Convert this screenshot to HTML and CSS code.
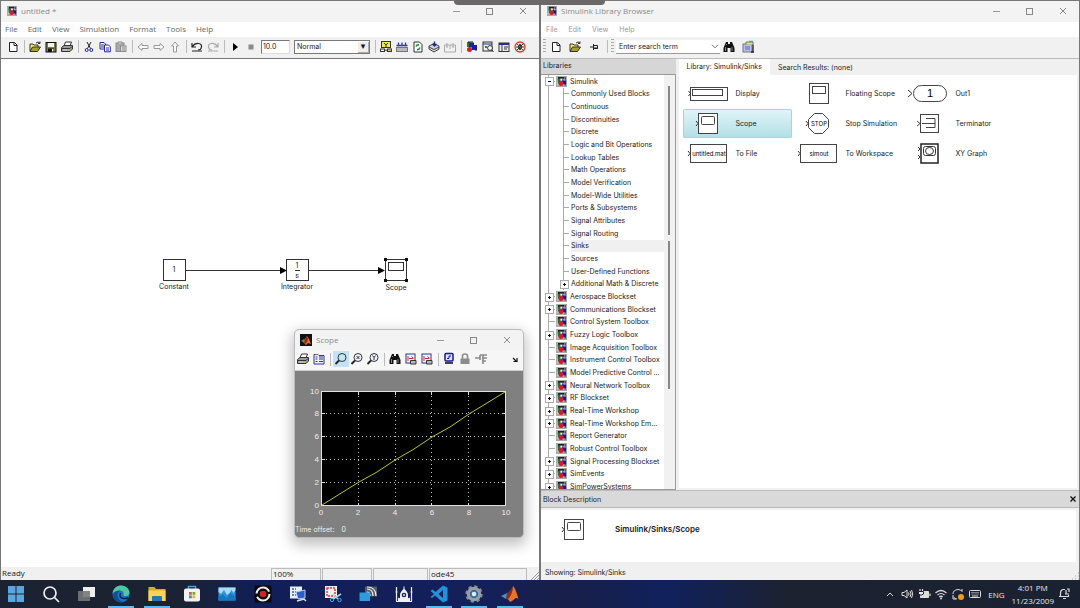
FILE: index.html
```html
<!DOCTYPE html>
<html lang="en">
<head>
<meta charset="utf-8">
<title>Simulink</title>
<link rel="stylesheet" href="styles.css">
</head>
<body>
<svg class="defs" aria-hidden="true">
  <symbol id="simulink" viewBox="0 0 12 12"><rect width="12" height="12" fill="#a8a8a8"/><path d="M1 1h9v9H1z" fill="#c9c9c9"/><path d="M2 1h7v2H4v2H2z" fill="#222"/><path d="M2 3h3v5H2z" fill="#147a33"/><path d="M6 3h2v2h3v4H7z" fill="#16169c"/><path d="M5 3h2v2H5z" fill="#f2f2f2"/><circle cx="5.500" cy="8" r="2.800" fill="#cf1d28"/><path d="M10 1v3M10 8.500v2" stroke="#222" fill="none"/></symbol>
  <symbol id="matlab" viewBox="0 0 12 12"><rect width="12" height="12" fill="#111"/><path d="M1 7l3-2 1 2-2 1z" fill="#3d8fb8"/><path d="M3 8l2-3 2-3 2 3 2 5-3-1-2 2z" fill="#e0702a"/><path d="M7 2l1 3-1 3-2 2-1-2z" fill="#8b2613"/></symbol>
  <symbol id="new" viewBox="0 0 16 16"><path d="M4.500 3.500h5l2.500 2.500v6.500H4.500z" fill="#fff" stroke="#222"/><path d="M9 3.500V6.500h3" fill="none" stroke="#222"/></symbol>
  <symbol id="open" viewBox="0 0 16 16"><path d="M3 12V5h3l1 1h4v2" fill="#f5ea6a" stroke="#333"/><path d="M3 12.500l2.500-4.500h8l-3 4.500z" fill="#a5a32a" stroke="#333"/><path d="M9 4q2-2 4 0m0-1.500v2h-2" fill="none" stroke="#333"/></symbol>
  <symbol id="save" viewBox="0 0 16 16"><rect x="3" y="3.500" width="10" height="9.500" fill="#7d8030" stroke="#111"/><rect x="5" y="4" width="6" height="4" fill="#f4f4f4"/><rect x="5" y="9.500" width="6" height="3.500" fill="#111"/><rect x="9" y="10" width="1.500" height="2.500" fill="#eee"/></symbol>
  <symbol id="print" viewBox="0 0 16 16"><path d="M5 7l1.500-4h6L11 7" fill="#fff" stroke="#333"/><path d="M2.500 8.500L5 6.500h8.500V10L11 12.500H2.500z" fill="#9b9b9b" stroke="#333"/><path d="M3 9.500h8l2-2" stroke="#333" fill="none"/><path d="M4 11h4" stroke="#ddd"/><path d="M8.500 11h2" stroke="#e4dc3d"/></symbol>
  <symbol id="cut" viewBox="0 0 16 16"><path d="M6 3l3.500 6.500M10 3L6.500 9.500" stroke="#222" fill="none"/><circle cx="5.700" cy="11" r="1.500" fill="none" stroke="#20208f"/><circle cx="10.300" cy="11" r="1.500" fill="none" stroke="#20208f"/></symbol>
  <symbol id="copy" viewBox="0 0 16 16"><path d="M3 3.500h4l1.500 1.500v5H3z" fill="#fff" stroke="#28289a"/><path d="M4 6h3M4 8h3" stroke="#28289a"/><path d="M7.500 6h4l1.800 1.800v5H7.500z" fill="#fff" stroke="#28289a"/><path d="M9 9h3M9 11h3" stroke="#28289a"/></symbol>
  <symbol id="paste" viewBox="0 0 16 16"><rect x="3" y="4" width="8" height="8.500" fill="#a9a9a9" stroke="#8b8b8b"/><path d="M5 4.500V3h4v1.500" fill="#ddd" stroke="#8b8b8b"/><rect x="7.500" y="7" width="5.500" height="5.500" fill="#ddd" stroke="#8b8b8b"/><path d="M9 9h3M9 11h3" stroke="#8b8b8b"/></symbol>
  <symbol id="arrow" viewBox="0 0 16 16"><path d="M3 8l4-3.500v2h6v3H7v2z" fill="#f8f8f8" stroke="#999"/></symbol>
  <symbol id="undo" viewBox="0 0 16 16"><path d="M3 4v4h4M3.500 7.500Q6 4 9.500 4.500T12.500 8T9 11" fill="none" stroke="currentColor" stroke-width="1.200"/><path d="M3 12h10" stroke="currentColor"/></symbol>
  <symbol id="play" viewBox="0 0 16 16"><path d="M6 4l5 4-5 4z" fill="#000"/></symbol>
  <symbol id="stop" viewBox="0 0 16 16"><rect x="5.500" y="5.500" width="5" height="5" fill="#8a8a8a"/></symbol>
  <symbol id="target" viewBox="0 0 16 16"><rect x="3.500" y="2.500" width="9" height="6" fill="#f0e64e" stroke="#333"/><path d="M6 4l2 2 2-2M8 6v2" stroke="#333" fill="none"/><rect x="2.500" y="10" width="4" height="2.500" fill="#fff" stroke="#333"/><path d="M6.500 11.200h3" stroke="#333"/><rect x="9.500" y="10" width="4" height="2.500" fill="#d8d03a" stroke="#333"/></symbol>
  <symbol id="incr" viewBox="0 0 16 16"><path d="M4.500 3.500v4M8 3.500v4M11.500 3.500v4M2.500 6.500h11" stroke="#333a9a" stroke-width="1.300"/><rect x="2.500" y="8.500" width="11" height="4" fill="#b9b9c4" stroke="#777"/></symbol>
  <symbol id="refresh" viewBox="0 0 16 16"><path d="M4 3h5.500L12 5.500V13H4z" fill="#fff" stroke="#333"/><path d="M6 7.500q1-2 3-1.500M10 8.500q-1 2.500-3 2" fill="none" stroke="#139337" stroke-width="1.600"/></symbol>
  <symbol id="build" viewBox="0 0 16 16"><path d="M3 7l5-2.500L13 7v3l-5 3-5-3z" fill="#d5d5d5" stroke="#444"/><path d="M3 8l5 2.500L13 8" fill="none" stroke="#444"/><path d="M8.500 2.500v4M6.500 5l2 2 2-2" stroke="#22289b" stroke-width="1.400" fill="none"/></symbol>
  <symbol id="books" viewBox="0 0 16 16"><path d="M2.500 6h11v7h-11zM5 4v4M8 6v4M11 4v4M4 8h2M10 8h2" fill="none" stroke="#aaa"/></symbol>
  <symbol id="library" viewBox="0 0 16 16"><path d="M3 3h3v5H3z" fill="#1b8140"/><path d="M5 3.500h5v5H5z" fill="#181ea8"/><path d="M8 6h5v5H8z" fill="#181ea8"/><path d="M4 3h5M12 7v5" stroke="#222"/><circle cx="5.500" cy="10.500" r="2.500" fill="#d51c29"/></symbol>
  <symbol id="explorer" viewBox="0 0 16 16"><rect x="3" y="3" width="9" height="9" fill="#eee" stroke="#333"/><path d="M3 5h9" stroke="#28289a"/><path d="M5 7h2v2H5z" fill="#1d8a3b"/><circle cx="10" cy="9" r="2.400" fill="#fff" stroke="#333"/><path d="M12 11l1.500 2" stroke="#333"/></symbol>
  <symbol id="model" viewBox="0 0 16 16"><rect x="3" y="4" width="10" height="8.500" fill="#eee" stroke="#333"/><path d="M3 5h10" stroke="#28289a" stroke-width="2"/><path d="M6 6v6M8 8h4M8 10h3" stroke="#333"/></symbol>
  <symbol id="debug" viewBox="0 0 16 16"><path d="M5 5l6 6M11 5l-6 6M4 8h8" stroke="#333"/><ellipse cx="8" cy="8" rx="2" ry="3" fill="#333"/><circle cx="8" cy="8" r="5" fill="none" stroke="#d8392b" stroke-width="1.300"/><path d="M4.500 4.500l7 7" stroke="#d8392b"/></symbol>
  <symbol id="pin" viewBox="0 0 16 16"><path d="M4 8h3.500" stroke="#222"/><path d="M7.500 5v6M7.500 6.500h4v3h-4M8 9h4" fill="none" stroke="#222"/></symbol>
  <symbol id="binoculars" viewBox="0 0 16 16"><path d="M5 3h2v2h2V3h2l2.500 6v4H9.500V9h-3v4H2.500V9z" fill="#111"/><path d="M4.500 8v4M11 8v4M5.500 5v1" stroke="#bbb" stroke-width=".700"/></symbol>
  <symbol id="inspect" viewBox="0 0 16 16"><rect x="3" y="5" width="9" height="8" fill="#b8bff2" stroke="#777"/><path d="M6 5.500V3h7v2.500" fill="#efe06b" stroke="#777"/><path d="M9 2.500h4" stroke="#48a8b8" stroke-width="1.500"/><path d="M5 8h5M5 10h5" stroke="#5b67c5"/><path d="M13 5.500v7M11 13h3" stroke="#222" stroke-width="1.300"/></symbol>
  <symbol id="params" viewBox="0 0 16 16"><path d="M3 3.500h4l1 1h5v8.500H3z" fill="#f5f5fb" stroke="#30309b"/><path d="M4.500 6h2M8 6h4M4.500 8h2M8 8h4M4.500 10.500h2M8 10.500h4" stroke="#30309b"/><path d="M4 3.500h3" stroke="#c54850"/></symbol>
  <symbol id="lens" viewBox="0 0 16 16"><path d="M6.500 9L2.500 13" stroke="#222" stroke-width="1.800"/><circle cx="9" cy="6.500" r="4" fill="#bfe9f5" stroke="#333"/></symbol>
  <symbol id="lensplain" viewBox="0 0 16 16"><path d="M6.500 9L2.500 13" stroke="#222" stroke-width="1.800"/><circle cx="9" cy="6.500" r="4" fill="#eef6fa" stroke="#333"/></symbol>
  <symbol id="export" viewBox="0 0 16 16"><rect x="3" y="3" width="9" height="9" fill="#f3f3fb" stroke="#30309b"/><path d="M5 5v5M6 7.500h4M8.500 5.500l2 2" stroke="#c62c36" fill="none"/><path d="M7.500 9.500h5.500v3.500H7.500z" fill="#bbb" stroke="#333"/></symbol>
  <symbol id="float" viewBox="0 0 16 16"><rect x="4" y="2.500" width="8" height="7.500" rx="1" fill="#dfe5ff" stroke="#15159c" stroke-width="1.500"/><path d="M6 7.500h2V5h2" fill="none" stroke="#15159c"/><path d="M4 12h8" stroke="#444" stroke-width="2"/></symbol>
  <symbol id="lock" viewBox="0 0 16 16"><rect x="3.500" y="7.500" width="9" height="5.500" fill="#8c8c8c"/><path d="M5.500 8V5q0-2 2.500-2t2.500 2v3" fill="none" stroke="#8c8c8c" stroke-width="1.600"/></symbol>
  <symbol id="signal" viewBox="0 0 16 16"><path d="M2 7h5M7 4h7M7 4v5M9 7h5M9 10h4M10 4v9" stroke="#8c8c8c" stroke-width="1.700" fill="none"/></symbol>
  <symbol id="winbtns" viewBox="0 0 74 8"><path d="M0 4.500h7" stroke="#999"/><rect x="33.500" y="1.500" width="6" height="6" fill="none" stroke="#888"/><path d="M67 1l6 6M73 1l-6 6" stroke="#888"/></symbol>
  <symbol id="scopeblock" viewBox="0 0 50 29"><path d="M13 12l2 2.500-2 2.500" fill="none" stroke="#333"/><rect x="15.500" y="4.500" width="19" height="20" fill="#fff" stroke="#444"/><rect x="18.500" y="7.500" width="13" height="8" rx="1" fill="none" stroke="#444"/></symbol>
</svg>

<div class="desktop">
<main class="windows">
<section class="window" aria-label="untitled model">
  <header class="titlebar"><svg class="appicon"><use href="#simulink"/></svg><h1>untitled *</h1><svg class="winbtns" role="img" aria-label="Minimize, maximize, close"><use href="#winbtns"/></svg></header>
  <nav class="menu"><button>File</button><button>Edit</button><button>View</button><button>Simulation</button><button>Format</button><button>Tools</button><button>Help</button></nav>
  <div class="toolbar">
    <button aria-label="New"><svg><use href="#new"/></svg></button><i class="sep"></i>
    <button aria-label="Open"><svg><use href="#open"/></svg></button><button aria-label="Save"><svg><use href="#save"/></svg></button><button aria-label="Print"><svg><use href="#print"/></svg></button><i class="sep"></i>
    <button aria-label="Cut"><svg><use href="#cut"/></svg></button><button aria-label="Copy"><svg><use href="#copy"/></svg></button><button aria-label="Paste"><svg><use href="#paste"/></svg></button><i class="sep"></i>
    <button aria-label="Back"><svg><use href="#arrow"/></svg></button><button aria-label="Forward"><svg class="flip"><use href="#arrow"/></svg></button><button aria-label="Up"><svg class="up"><use href="#arrow"/></svg></button><i class="sep"></i>
    <button aria-label="Undo"><svg><use href="#undo"/></svg></button><button class="dim" aria-label="Redo"><svg class="flip"><use href="#undo"/></svg></button><i class="sep"></i>
    <button aria-label="Start simulation"><svg><use href="#play"/></svg></button><button aria-label="Stop simulation"><svg><use href="#stop"/></svg></button>
    <input class="stoptime" aria-label="Stop time" value="10.0">
    <span class="mode"><select aria-label="Simulation mode"><option>Normal</option></select></span><i class="sep"></i>
    <button aria-label="Update target"><svg><use href="#target"/></svg></button><button aria-label="Incremental build"><svg><use href="#incr"/></svg></button><button aria-label="Refresh"><svg><use href="#refresh"/></svg></button><button aria-label="Build"><svg><use href="#build"/></svg></button><button aria-label="Build subsystem"><svg><use href="#books"/></svg></button><i class="sep"></i>
    <button aria-label="Library browser"><svg><use href="#library"/></svg></button><button aria-label="Model explorer"><svg><use href="#explorer"/></svg></button><button aria-label="Model browser"><svg><use href="#model"/></svg></button><button aria-label="Debug"><svg><use href="#debug"/></svg></button>
  </div>
  <div class="canvas">
    <svg class="diagram" viewBox="0 0 270 50" role="img" aria-label="Block diagram">
      <g fill="none" stroke="#333"><rect x="13.500" y="9.500" width="22" height="21"/><rect x="136.500" y="9.500" width="22" height="21"/><path d="M36 20.500h94M159 20.500h70"/><rect x="235.500" y="9.500" width="21" height="21"/><rect x="238.500" y="12.500" width="15" height="8"/><path d="M145 20.500h5"/></g>
      <path d="M130 17l7 3.500-7 3.500zM228 17l7 3.500-7 3.500z"/>
      <path d="M234 8h3v3h-3zM255 8h3v3h-3zM234 29h3v3h-3zM255 29h3v3h-3z" fill="#111"/>
      <g class="blocktext"><text x="24" y="22">1</text><text x="147" y="18">1</text><text x="147" y="28">s</text><text x="24" y="39">Constant</text><text x="147" y="39">Integrator</text><text x="246" y="40">Scope</text></g>
    </svg>
    <section class="scope" aria-label="Scope">
      <header class="titlebar"><svg class="appicon"><use href="#matlab"/></svg><h2>Scope</h2><svg class="winbtns" role="img" aria-label="Minimize, maximize, close"><use href="#winbtns"/></svg></header>
      <div class="toolbar">
        <button aria-label="Print"><svg><use href="#print"/></svg></button><button aria-label="Parameters"><svg><use href="#params"/></svg></button><i class="sep"></i>
        <button class="on" aria-label="Zoom"><svg><use href="#lens"/></svg></button><button aria-label="Zoom X"><svg viewBox="0 0 16 16"><use href="#lensplain"/><path d="M7.500 5l3 3M10.500 5l-3 3" stroke="#27278f"/></svg></button><button aria-label="Zoom Y"><svg viewBox="0 0 16 16"><use href="#lensplain"/><path d="M7.500 4.500L9 6.500l1.500-2M9 6.500v2.500" stroke="#27278f" fill="none"/></svg></button><i class="sep"></i>
        <button aria-label="Autoscale"><svg><use href="#binoculars"/></svg></button><button aria-label="Save axes"><svg><use href="#export"/></svg></button><button aria-label="Restore axes"><svg><use href="#export"/></svg></button><i class="sep"></i>
        <button aria-label="Floating scope"><svg><use href="#float"/></svg></button><button aria-label="Lock axes"><svg><use href="#lock"/></svg></button><button aria-label="Signal selection"><svg><use href="#signal"/></svg></button>
        <button class="dock" aria-label="Dock"><svg viewBox="0 0 10 16"><path d="M2 7l3 3M6 7v3.500H2.500" fill="none" stroke="#111" stroke-width="1.200"/></svg></button>
      </div>
      <div class="plot">
        <svg viewBox="0 0 228 152" role="img" aria-label="Ramp from 0 to 10">
          <rect x="26.500" y="21.500" width="184" height="114" fill="#000" stroke="#e0e0e0"/>
          <path d="M63.500 22v114M100.500 22v114M136.500 22v114M173.500 22v114M27 43.500h184M27 66.500h184M27 89.500h184M27 112.500h184" stroke="#c4c4c4" stroke-dasharray="1 3"/>
          <path d="M63.500 22v3M100.500 22v3M136.500 22v3M173.500 22v3M63.500 136v-3M100.500 136v-3M136.500 136v-3M173.500 136v-3M27 43.500h3M27 66.500h3M27 89.500h3M27 112.500h3M211 43.500h-3M211 66.500h-3M211 89.500h-3M211 112.500h-3" stroke="#ddd"/>
          <path d="M27 135L64 112L82 102L100 90L119 79L137 67L155 57L174 44L192 33L210 22" stroke="#b9c62d" fill="none"/>
          <g class="yaxis"><text x="24" y="24">10</text><text x="24" y="46">8</text><text x="24" y="69">6</text><text x="24" y="92">4</text><text x="24" y="115">2</text><text x="24" y="138">0</text></g>
          <g class="xaxis"><text x="26" y="145">0</text><text x="63" y="145">2</text><text x="100" y="145">4</text><text x="137" y="145">6</text><text x="174" y="145">8</text><text x="211" y="145">10</text></g>
        </svg>
        <p>Time offset: <span>0</span></p>
      </div>
    </section>
  </div>
  <footer class="status"><span>Ready</span><span>100%</span><span></span><span></span><span>ode45</span><svg class="grip" viewBox="0 0 8 8"><path d="M0 8L8 0M3 8l5-5M6 8l2-2" stroke="#999"/></svg></footer>
</section>

<section class="window browser" aria-label="Simulink Library Browser">
  <header class="titlebar"><svg class="appicon"><use href="#simulink"/></svg><h1>Simulink Library Browser</h1><svg class="winbtns" role="img" aria-label="Minimize, maximize, close"><use href="#winbtns"/></svg></header>
  <nav class="menu"><button>File</button><button>Edit</button><button>View</button><button>Help</button></nav>
  <div class="toolbar">
    <i class="handle"></i><button aria-label="New"><svg><use href="#new"/></svg></button><button aria-label="Open"><svg><use href="#open"/></svg></button><button aria-label="Stay on top"><svg><use href="#pin"/></svg></button><i class="sep"></i><i class="handle"></i>
    <div class="search"><input aria-label="Search term" value="Enter search term"><button aria-label="Search history"><svg viewBox="0 0 8 8"><path d="M1.500 3L4 5.500 6.500 3" fill="none" stroke="#777" stroke-width=".800"/></svg></button></div>
    <button aria-label="Find"><svg><use href="#binoculars"/></svg></button><button aria-label="Block details"><svg><use href="#inspect"/></svg></button>
  </div>
  <div class="body">
    <aside class="libs">
      <h2>Libraries</h2>
      <div class="treebox">
        <ul class="tree">
          <li class="exp open"><svg><use href="#simulink"/></svg>Simulink</li>
          <li class="sub">Commonly Used Blocks</li>
          <li class="sub">Continuous</li>
          <li class="sub">Discontinuities</li>
          <li class="sub">Discrete</li>
          <li class="sub">Logic and Bit Operations</li>
          <li class="sub">Lookup Tables</li>
          <li class="sub">Math Operations</li>
          <li class="sub">Model Verification</li>
          <li class="sub">Model-Wide Utilities</li>
          <li class="sub">Ports &amp; Subsystems</li>
          <li class="sub">Signal Attributes</li>
          <li class="sub">Signal Routing</li>
          <li class="sub current"><span>Sinks</span></li>
          <li class="sub">Sources</li>
          <li class="sub">User-Defined Functions</li>
          <li class="sub exp last">Additional Math &amp; Discrete</li>
          <li class="exp"><svg><use href="#simulink"/></svg>Aerospace Blockset</li>
          <li class="exp"><svg><use href="#simulink"/></svg>Communications Blockset</li>
          <li><svg><use href="#simulink"/></svg>Control System Toolbox</li>
          <li class="exp"><svg><use href="#simulink"/></svg>Fuzzy Logic Toolbox</li>
          <li><svg><use href="#simulink"/></svg>Image Acquisition Toolbox</li>
          <li><svg><use href="#simulink"/></svg>Instrument Control Toolbox</li>
          <li><svg><use href="#simulink"/></svg>Model Predictive Control ...</li>
          <li class="exp"><svg><use href="#simulink"/></svg>Neural Network Toolbox</li>
          <li class="exp"><svg><use href="#simulink"/></svg>RF Blockset</li>
          <li class="exp"><svg><use href="#simulink"/></svg>Real-Time Workshop</li>
          <li class="exp"><svg><use href="#simulink"/></svg>Real-Time Workshop Em...</li>
          <li><svg><use href="#simulink"/></svg>Report Generator</li>
          <li><svg><use href="#simulink"/></svg>Robust Control Toolbox</li>
          <li class="exp"><svg><use href="#simulink"/></svg>Signal Processing Blockset</li>
          <li class="exp"><svg><use href="#simulink"/></svg>SimEvents</li>
          <li class="exp"><svg><use href="#simulink"/></svg>SimPowerSystems</li>
        </ul>
        <div class="scroll"><i></i><i></i></div>
      </div>
    </aside>
    <div class="content">
      <div class="tabs"><button class="on">Library: Simulink/Sinks</button><button>Search Results: (none)</button></div>
      <ul class="blocks">
        <li><svg viewBox="0 0 50 29"><rect x="7.500" y="8.500" width="37" height="13" fill="none" stroke="#444"/><rect x="9.500" y="10.500" width="30" height="6" fill="none" stroke="#444"/><path d="M5.500 12l2 2.500-2 2.500" fill="none" stroke="#333"/></svg>Display</li>
        <li><svg viewBox="0 0 50 29"><rect x="16.500" y="4.500" width="19" height="20" fill="none" stroke="#444"/><rect x="19.500" y="7.500" width="13" height="7" fill="none" stroke="#444"/></svg>Floating Scope</li>
        <li><svg viewBox="0 0 50 29"><rect x="10.500" y="6.500" width="33" height="16" rx="8" fill="none" stroke="#444"/><path d="M5 11l4 3.500L5 18" fill="none" stroke="#333"/><text class="big" x="27" y="18">1</text></svg>Out1</li>
        <li class="selected"><svg><use href="#scopeblock"/></svg>Scope</li>
        <li><svg viewBox="0 0 50 29"><path d="M21.500 4.500h8l6 6v8l-6 6h-8l-6-6v-8z" fill="none" stroke="#444"/><path d="M13 12l2 2.500-2 2.500" fill="none" stroke="#333"/><text x="26" y="17">STOP</text></svg>Stop Simulation</li>
        <li><svg viewBox="0 0 50 29"><rect x="17.500" y="5.500" width="18" height="18" fill="none" stroke="#444"/><path d="M14 12l3 2.500-3 2.500M19 14.500h13M23 9.500h9v9h-9" fill="none" stroke="#444"/></svg>Terminator</li>
        <li><svg viewBox="0 0 50 29"><rect x="7.500" y="5.500" width="36" height="18" fill="none" stroke="#444"/><path d="M5 12l2 2.500-2 2.500" fill="none" stroke="#333"/><text x="26" y="17">untitled.mat</text></svg>To File</li>
        <li><svg viewBox="0 0 50 29"><rect x="7.500" y="5.500" width="36" height="18" fill="none" stroke="#444"/><path d="M5 12l2 2.500-2 2.500" fill="none" stroke="#333"/><text x="26" y="17">simout</text></svg>To Workspace</li>
        <li><svg viewBox="0 0 50 29"><rect x="18" y="5" width="17" height="19" fill="none" stroke="#222" stroke-width="1.500"/><rect x="20.500" y="7.500" width="12" height="9" rx="2" fill="none" stroke="#333"/><ellipse cx="26.500" cy="12" rx="4" ry="3.500" fill="none" stroke="#333"/><path d="M15 8l2 2-2 2M15 16l2 2-2 2" fill="none" stroke="#333"/></svg>XY Graph</li>
      </ul>
    </div>
  </div>
  <div class="deschead"><h2>Block Description</h2><button aria-label="Close description"><svg viewBox="0 0 6 6"><path d="M.500 .500l5 5M5.500 .500l-5 5" stroke="#111" stroke-width="1.300"/></svg></button></div>
  <div class="desc"><svg><use href="#scopeblock"/></svg><strong>Simulink/Sinks/Scope</strong></div>
  <footer class="showing">Showing: Simulink/Sinks<svg class="grip" viewBox="0 0 8 8"><path d="M1 7h1M4 7h1M7 7h1M4 4h1M7 4h1M7 1h1" stroke="#aaa"/></svg></footer>
</section>
</main>

<footer class="taskbar">
  <nav class="apps">
    <button aria-label="Start"><svg viewBox="0 0 20 20"><path d="M2 2h7.500v7.500H2zM10.500 2H18v7.500h-7.500zM2 10.500h7.500V18H2zM10.500 10.500H18V18h-7.500z" fill="#5ba6e0"/></svg></button>
    <button aria-label="Search"><svg viewBox="0 0 20 20"><circle cx="9" cy="9" r="6" fill="none" stroke="#eee" stroke-width="1.700"/><path d="M13.500 13.500L18 18" stroke="#eee" stroke-width="1.700"/></svg></button>
    <button aria-label="Task view"><svg viewBox="0 0 20 20"><rect x="7" y="3" width="12" height="10" fill="#eee"/><rect x="2" y="7" width="12" height="10" fill="#777" opacity=".9"/></svg></button>
    <button class="run" aria-label="Edge"><svg viewBox="0 0 20 20"><circle cx="10" cy="10" r="8.500" fill="#1877c9"/><path d="M1.500 9Q3 1.500 10 1.500t8.500 6.500q0 4-4 4-2.500 0-2-2 .5-3-3-3.500Q5 6 1.500 9z" fill="#4fc8a0"/><path d="M9.500 6.500q-4 2-3 6t6 5.500q-7 1-9.500-4T6 7z" fill="#0e4e94"/><path d="M9.500 9q-2 5 3 5.500 3 .3 5-1" fill="none" stroke="#14203f" stroke-width="1.500"/></svg></button>
    <button class="run" aria-label="File Explorer"><svg viewBox="0 0 20 20"><path d="M1.500 3h6l1.500 2h9.500v12h-17z" fill="#e2a622"/><path d="M1.500 6.500h17V17h-17z" fill="#ffd35a"/><path d="M5 17v-4q0-1 1-1h8q1 0 1 1v4z" fill="#1f7ab5"/></svg></button>
    <button aria-label="Store"><svg viewBox="0 0 20 20"><path d="M6.500 5V2.500h7V5" fill="none" stroke="#41a5df" stroke-width="1.400"/><rect x="2" y="4.500" width="16" height="13" rx="2" fill="#f2f2f2"/><path d="M7 8h2.800v2.800H7z" fill="#df5739"/><path d="M10.500 8h2.800v2.800h-2.800z" fill="#76a93b"/><path d="M7 11.500h2.800v2.800H7z" fill="#2d90d0"/><path d="M10.500 11.500h2.800v2.800h-2.800z" fill="#eab52d"/></svg></button>
    <button aria-label="Monitor"><svg viewBox="0 0 20 20"><rect x="1.500" y="3.500" width="17" height="13" fill="#2c93dc"/><path d="M1.500 3.500h17V6l-2 3-2-3-2 3-2.500 2L7 6l-3 4-2.500-2z" fill="#a9dcf2"/><path d="M1.500 13l4-3 4 4 4-5 5 4v3.500h-17z" fill="#1978bd"/></svg></button>
    <button aria-label="Recorder"><svg viewBox="0 0 20 20"><rect x="1.500" y="1.500" width="17" height="17" fill="#0a0a0a"/><circle cx="10" cy="10" r="6.500" fill="none" stroke="#eee" stroke-width="2" stroke-dasharray="17 3.400"/><circle cx="10" cy="10" r="3.300" fill="#cf222b"/></svg></button>
    <button aria-label="Remote desktop"><svg viewBox="0 0 20 20"><rect x="2" y="2.500" width="12" height="12" fill="#e8eef8"/><path d="M4 5h4M4 8h4M4 11h4" stroke="#3864b5" stroke-width="1.500" stroke-dasharray="2 1"/><path d="M8 8l9-2v8l-7 1z" fill="#2b5fc7" stroke="#b7c9ed"/><path d="M9 17l7-2 2 2" stroke="#ddd" stroke-width="1.500" fill="none"/></svg></button>
    <button aria-label="Snipping tool"><svg viewBox="0 0 20 20"><rect x="2" y="2" width="12" height="12" fill="#f1f1f1"/><rect x="4" y="4" width="8" height="8" fill="none" stroke="#d33d38" stroke-width="1.500" stroke-dasharray="2 1"/><path d="M10 10l5 5M18 10l-8 5" stroke="#a5d5ed" stroke-width="1.500"/><circle cx="16.500" cy="16" r="1.700" fill="none" stroke="#48aadf"/><circle cx="9" cy="16" r="1.700" fill="none" stroke="#48aadf"/></svg></button>
    <button aria-label="Cast"><svg viewBox="0 0 20 20"><rect x="7" y="2.500" width="12" height="10" fill="#555b68"/><path d="M9 5q6 0 6 7M9 8q3 0 3 4M9 3q9 0 9 9" fill="none" stroke="#eee" stroke-width="1.200"/><rect x="1.500" y="8.500" width="10.500" height="8.500" fill="#2d9bdc"/></svg></button>
    <button aria-label="Prayer times"><svg viewBox="0 0 20 20"><path d="M2.500 17V3M17.500 17V3" stroke="#eee" stroke-width="1.200"/><path d="M1.500 8h2M16.500 8h2M2 17.500h16M4 15h12M10 2.500v3" stroke="#eee"/><path d="M10 4.500q4 3.500 4 6.500v3.500l2-1V17H4v-3.500l2 1V11q0-3 4-6.500z" fill="#eee"/><circle cx="10" cy="11" r="2.300" fill="#14205c"/><circle cx="10" cy="11" r="1" fill="#eee"/></svg></button>
    <button class="run" aria-label="Visual Studio Code"><svg viewBox="0 0 20 20"><path d="M14 1.500l4.500 2v13l-4.500 2-8-7-3 2.500L1.500 13 5 10 1.500 7l2-1.500 3 2.500zM14 6l-4.500 4 4.500 4z" fill="#2391db" fill-rule="evenodd"/></svg></button>
    <button class="run" aria-label="Settings"><svg viewBox="0 0 20 20"><circle cx="10" cy="10" r="7.500" fill="none" stroke="#86898f" stroke-width="2.500" stroke-dasharray="3.200 2.690"/><circle cx="10" cy="10" r="5.500" fill="none" stroke="#9a9da2" stroke-width="3.500"/><circle cx="10" cy="10" r="3" fill="#e2edf5" stroke="#2b78bb" stroke-width="1.500"/></svg></button>
    <button class="run" aria-label="MATLAB"><svg viewBox="0 0 20 20"><path d="M1 12l6-3 3 2-4 4z" fill="#4a8fc9"/><path d="M7 9q3-1 6-7l-3 14-4-1z" fill="#8e2b1a"/><path d="M13 2q2 1 5.500 13-2-2-4 0t-4.500 3l-2-3q4-3 5-13z" fill="#e5742d"/></svg></button>
  </nav>
  <div class="tray">
    <svg viewBox="0 0 14 14"><path d="M4 9l3-3 3 3" fill="none" stroke="#ddd"/></svg>
    <svg viewBox="0 0 14 14"><path d="M2 5.500h2L7 3v8L4 8.500H2zM8.500 5.500q1 1.500 0 3M10 4q2 3 0 6M11.500 3q2.500 4 0 8" fill="none" stroke="#ddd"/></svg>
    <svg viewBox="0 0 14 14"><path d="M3.500 4.500h8v6h-8z" fill="#ddd" stroke="#ddd"/><path d="M13 6.500v2.500M3 2v3M5.500 2v3" stroke="#ddd" stroke-width="1.200"/><path d="M1.500 4.500h5V7q-2.500 2.500-5 0z" fill="#eee" stroke="#1c2230"/></svg>
    <svg viewBox="0 0 14 14"><path d="M1.500 6q5.500-5 11 0M3.500 8q3.500-3 7 0M5.300 10q1.700-1.500 3.400 0" fill="none" stroke="#ddd" stroke-width="1.200"/><circle cx="7" cy="11.500" r="1" fill="#ddd"/></svg>
    <svg viewBox="0 0 14 14"><path d="M2 7q0-4 5-4.500 3 0 4 2V2M2 8v4h3M2.500 10Q4 12 6 12" fill="none" stroke="#ddd"/><circle cx="10" cy="10" r="3" fill="#f39c1c"/></svg>
    <svg viewBox="0 0 14 14"><rect x="1.500" y="3.500" width="11" height="7" rx="1" fill="none" stroke="#ddd"/><path d="M3.500 5.500h7M3.500 7h7" stroke="#ddd" stroke-dasharray="1 1"/><path d="M4 9h6" stroke="#ddd"/></svg>
    <span>ENG</span>
    <time>4:01 PM<br>11/23/2009</time>
    <svg viewBox="0 0 14 14"><path d="M8 2.500H6Q3.500 3 3.500 6v3.500h8V8M2 9.500h10M6 11.500h3M8 7h4L9 7V3M10 2h2v3" fill="none" stroke="#ddd" stroke-width="1.200"/></svg>
  </div>
</footer>
<div class="toptab"></div>
</div>
</body>
</html>
```
FILE: styles.css
```css
* { box-sizing: border-box; }
body { margin: 0; font: 7px/9px Inter, "Liberation Sans", sans-serif; color: #222; }
h1, h2, p, ul { margin: 0; padding: 0; font: inherit; list-style: none; }
button { margin: 0; padding: 0; border: 0; background: none; font: inherit; color: inherit; }
input, select { margin: 0; font: inherit; color: inherit; border-radius: 0; }
svg { display: block; flex: none; }
.defs { display: none; }

.desktop { position: relative; display: grid; grid-template-rows: 1fr auto; height: 100vh; overflow: hidden; }
.windows { display: grid; grid-template-columns: 1fr 1fr; min-height: 0; }
.window { display: flex; flex-direction: column; min-width: 0; min-height: 0; background: #f0f0f0; border: 1px solid #777; border-width: 1px 1px 0 1px; }
.toptab { position: absolute; left: 42%; top: 0; width: 14%; height: 5px; background: #6b6869; border-radius: 0 0 4px 4px; }

.titlebar { display: flex; align-items: center; gap: 4px; height: 21px; padding: 0 12px 1px 6px; background: #f3f3f3; color: #8a8a8a; font: 8px/10px "Open Sans", sans-serif; }
.appicon { width: 10px; height: 10px; }
.winbtns { width: 74px; height: 8px; margin-left: auto; }
.menu { display: flex; align-items: center; gap: 10px; height: 15px; padding: 0 4px 2px; background: #fff; color: #666; font: 8px/10px "Open Sans", sans-serif; }
.browser .menu { gap: 11px; padding: 0 5px 1px; color: #999; font: 7px/9px Inter, sans-serif; }

.toolbar { display: flex; align-items: center; height: 21px; padding: 0 0 2px 4px; background: #f1f1f1; }
.toolbar button, .toolbar button svg { width: 16px; height: 16px; flex: none; }
.toolbar .sep { width: 6px; height: 13px; background: linear-gradient(#bbb, #bbb) center / 1px 100% no-repeat; }
.flip { transform: scaleX(-1); }
.up { transform: rotate(90deg); }
.dim { color: #aaa; }
.stoptime { width: 29px; height: 14px; margin: 0 4px 0 2px; padding: 0 1px; border: 1px solid #bbb; border-color: #777 #ddd #ddd #777; background: #fff; }
.mode { position: relative; width: 76px; margin-right: 2px; }
.mode select { display: block; width: 100%; height: 14px; padding: 0 2px; appearance: none; border: 1px solid #777; background: #fff; }
.mode::after { content: "▾"; position: absolute; top: 2px; right: 1px; width: 10px; height: 10px; border: 1px solid #aaa; border-width: 0 1px 1px 0; background: #eee; color: #111; font: 9px/9px "DejaVu Sans", sans-serif; text-align: center; pointer-events: none; }

.canvas { position: relative; flex: 1; min-height: 0; background: #fff; border-top: 1px solid #777; }
.diagram { position: absolute; left: 149px; top: 191px; width: 270px; height: 50px; }
.blocktext { font-size: 7px; text-anchor: middle; fill: #222; }

.scope { position: absolute; left: 293px; top: 270px; width: 230px; border: 1px solid #bbb; border-radius: 5px; overflow: hidden; background: #808080; box-shadow: 0 5px 14px 2px rgba(0, 0, 0, .25); }
.scope .titlebar { height: 20px; padding: 0 12px 0 5px; }
.scope .appicon { width: 12px; height: 12px; }
.scope .toolbar { padding: 0 2px 2px 0; border-bottom: 1px solid #ccc; background: #f6f6f6; }
.scope .toolbar .dock { margin-left: auto; }
.scope .toolbar .dock, .scope .toolbar .dock svg { width: 10px; }
.scope .toolbar .on { background: #c5e3f8; }
.plot { color: #eee; padding-bottom: 3px; }
.plot svg { width: 100%; height: auto; margin-top: -1px; }
.yaxis, .xaxis { font: 8px "Liberation Sans", sans-serif; fill: #eee; }
.yaxis { text-anchor: end; }
.xaxis { text-anchor: middle; }
.plot p { padding-top: 3px; }
.plot span { margin-left: 5px; }

.status { display: flex; gap: 1px; height: 13px; padding-top: 1px; font: 8px/11px "Open Sans", sans-serif; }
.status span { width: 50px; padding-left: 1px; border: 1px solid #bbb; border-width: 1px 1px 0 1px; white-space: nowrap; line-height: 10px; }
.status span:first-child { flex: 1; border: 0; }
.status span:nth-child(4) { width: 55px; }
.status span:nth-child(5) { width: 98px; margin-right: 3px; }
.grip { width: 8px; height: 8px; align-self: flex-end; margin-left: auto; }

.browser .toolbar { padding-left: 2px; }
.browser .toolbar > button { margin: 0 2px 0 1px; }
.handle { width: 3px; height: 15px; margin-right: 1px; background: repeating-linear-gradient(#aaa 0 1px, #f1f1f1 1px 3px); }
.browser .sep + .handle { margin: 0 2px 0 1px; }
.search { display: flex; align-items: center; width: 104px; height: 14px; background: #fff; border-bottom: 1px solid #999; }
.search input { flex: 1; min-width: 0; height: 12px; padding: 0 3px; border: 0; background: none; }
.toolbar .search button, .toolbar .search svg { width: 10px; height: 10px; }

.body { display: flex; flex: 1; min-height: 0; gap: 3px; border-top: 1px solid #bbb; }
.libs { display: flex; flex-direction: column; flex: none; width: 25%; min-height: 0; }
.libs h2 { height: 16px; padding: 2px; background: #d6d6d6; border-bottom: 1px solid #999; }
.treebox { display: flex; flex: 1; min-height: 0; overflow: hidden; background: #fff; border: 1px solid #999; border-width: 0 1px 1px 0; }
.tree { display: grid; grid-auto-rows: 1fr; flex: 1; height: calc(100% + 4px); }
.tree li { position: relative; display: flex; align-items: center; gap: 3px; min-height: 0; padding-left: 15px; white-space: nowrap; background: linear-gradient(#aaa, #aaa) 7px 0 / 1px 100% no-repeat, linear-gradient(#aaa, #aaa) 7px 50% / 7px 1px no-repeat; }
.tree svg { width: 11px; height: 11px; }
.tree .sub { padding-left: 30px; background: linear-gradient(#aaa, #aaa) 7px 0 / 1px 100% no-repeat, linear-gradient(#aaa, #aaa) 22px 0 / 1px 100% no-repeat, linear-gradient(#aaa, #aaa) 22px 50% / 6px 1px no-repeat; }
.tree .sub.current span { flex: 1; height: 100%; display: flex; align-items: center; background: #f0f0f0; }
.tree .exp::before { content: ""; position: absolute; left: 4px; top: calc(50% - 4px); width: 7px; height: 7px; border: 1px solid #aaa; background: linear-gradient(#111, #111) center / 3px 1px no-repeat, linear-gradient(#111, #111) center / 1px 3px no-repeat, #fff; }
.tree .open::before { background: linear-gradient(#111, #111) center / 3px 1px no-repeat, #fff; }
.tree .sub.exp::before { left: 19px; }
.scroll { display: flex; flex-direction: column; align-items: center; gap: 6px; width: 11px; padding: 11px 0 100px; background: #f1f1f1; }
.scroll i { flex: 1; width: 2px; background: #888; }

.content { display: flex; flex-direction: column; flex: 1; min-width: 0; background: #fff; border-right: 2px solid #f0f0f0; margin-bottom: 2px; }
.tabs { display: flex; height: 16px; background: #f0f0f0; }
.tabs button { padding: 0 8px; white-space: nowrap; }
.tabs .on { background: #fff; padding-bottom: 2px; }
.blocks { display: grid; grid-template-columns: repeat(3, 109px); grid-auto-rows: 29px; gap: 1px; padding: 4px; }
.blocks li { display: flex; align-items: center; gap: 3px; white-space: nowrap; border-radius: 2px; }
.blocks svg, .desc svg { width: 50px; height: 29px; }
.blocks text { font-size: 6px; text-anchor: middle; }
.blocks .big { font: 11px "Liberation Sans", sans-serif; }
.blocks .selected { background: linear-gradient(#e2f5f9, #b1dfe6); box-shadow: inset 0 0 0 1px #a8d5dd; }

.deschead { display: flex; align-items: center; justify-content: space-between; height: 18px; padding: 0 3px 0 2px; background: #d9d9d9; border: 1px solid #bbb; border-width: 1px 0; }
.deschead svg { width: 6px; height: 6px; }
.desc { display: flex; align-items: center; gap: 16px; height: 52px; margin: 2px 3px 3px 0; padding: 0 8px 13px; background: #fff; }
.desc strong { font-size: 8px; font-weight: 600; }
.showing { display: flex; align-items: center; height: 15px; padding: 0 0 0 4px; }

.taskbar { display: flex; justify-content: space-between; height: 28px; background: linear-gradient(90deg, #1b2231 0, #1a2233 17%, #111e57 24%, #13205a 45%, #181f48 52%, #10215c 62%, #1c2230 73%, #1a2130); color: #e6e6e6; font: 8px/13px "Open Sans", sans-serif; }
.apps { display: grid; grid-template-columns: repeat(15, 1fr); width: 49%; margin-left: -2px; }
.apps button { display: grid; place-items: center; }
.apps svg { width: 20px; height: 20px; }
.apps .run { background: linear-gradient(#5cb8f2, #5cb8f2) bottom / 26px 2px no-repeat; }
.tray { display: flex; align-items: center; gap: 3px; padding-right: 9px; }
.tray svg { width: 14px; height: 14px; }
.tray span { margin: 0 4px 0 3px; }
.tray time { text-align: center; }
```
